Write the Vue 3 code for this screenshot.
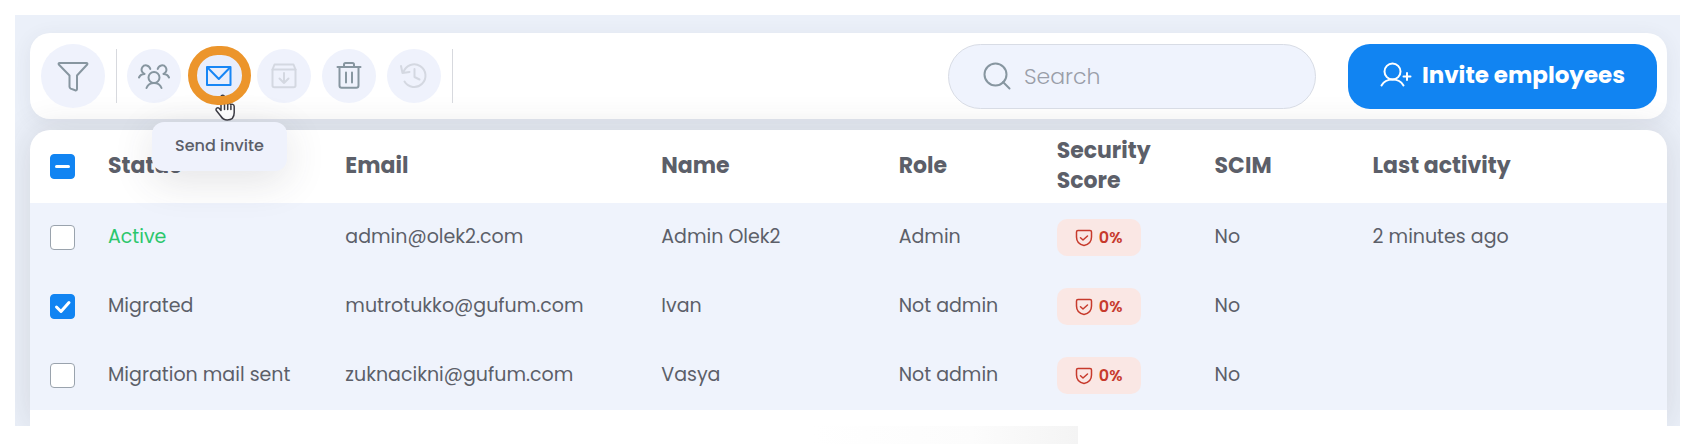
<template>
  <div class="page">
    <main class="panel">
      <div class="toolbar">
        <button class="icon-btn icon-btn-large" type="button" aria-label="Filter">
          <svg width="32" height="32" viewBox="0 0 32 32">
            <path d="M2.500 3h27c.8 0 1.200.9.700 1.500L20 15.500V29c0 1.200-.9 1.700-1.800 1.300l-4.500-1.700c-.8-.4-1.200-1-1.200-1.800V15.500L1.800 4.500C1.300 3.900 1.700 3 2.500 3z" />
          </svg>
        </button>
        <span class="divider"></span>
        <div class="actions">
          <div
            v-for="action in actions"
            :key="action.name"
            class="action"
            :class="{ 'action-current': action.name === hovered }"
          >
            <button
              class="icon-btn"
              :class="{ 'icon-btn-active': action.name === hovered }"
              type="button"
              :disabled="action.disabled"
              :aria-label="action.label"
            >
              <svg width="32" height="32" viewBox="0 0 32 32">
                <path v-for="d in action.paths" :key="d" :d="d" />
              </svg>
            </button>
            <template v-if="action.name === hovered">
              <svg class="cursor" width="21" height="27" viewBox="0 0 21 27">
                <path d="M6 16.500V3.200c0-2.500 3.400-2.500 3.400 0v7c.3-1.900 3-1.700 3.200.2.500-1.500 3-1.200 3.200.6.600-1.200 3.400-1 3.400 1.500v6c0 4.500-2.500 7.500-7 7.500-3.500 0-5-1.500-6.500-4L1.300 16.500c-1-2 1.300-3.700 2.800-2.200z" />
                <path d="M9.500 10.500v5M12.700 11v4.500M15.900 12v3.500" />
              </svg>
              <span class="ring"></span>
              <span class="tooltip" role="tooltip">{{ action.label }}</span>
            </template>
          </div>
        </div>
        <span class="divider"></span>

        <label class="search">
          <svg width="28" height="28" viewBox="0 0 28 28">
            <circle cx="12.500" cy="12.500" r="11" />
            <path d="M20 20l6.500 6.500" />
          </svg>
          <input v-model="query" type="text" placeholder="Search" aria-label="Search" />
        </label>
        <button class="invite" type="button">
          <svg width="32" height="26" viewBox="0 0 32 26">
            <circle cx="12.500" cy="9.500" r="8" />
            <path d="M1.500 23.500c2-3.600 5.600-6 11-6s9 2.400 11 6M27 11v7M23.500 14.500h7" />
          </svg>
          Invite employees
        </button>
      </div>

      <div class="table-card">
        <table>
          <thead>
            <tr>
              <th class="col-check">
                <span class="check">
                  <input type="checkbox" class="partial" aria-label="Select all" />
                  <svg width="25" height="25" viewBox="0 0 25 25"><path d="M6.500 12.500h12" /></svg>
                </span>
              </th>
              <th
                v-for="col in columns"
                :key="col.key"
                :class="`col-${col.key}`"
              >
                {{ col.title }}
              </th>
            </tr>
          </thead>
          <tbody>
            <tr v-for="row in rows" :key="row.email">
              <td class="col-check">
                <span class="check">
                  <input v-model="row.selected" type="checkbox" :aria-label="`Select ${row.name}`" />
                  <svg v-if="row.selected" width="25" height="25" viewBox="0 0 25 25">
                    <path d="M6.500 13l4.500 4.500 8-9" />
                  </svg>
                </span>
              </td>
              <td :class="{ 'status-active': row.status === 'Active' }">{{ row.status }}</td>
              <td>{{ row.email }}</td>
              <td>{{ row.name }}</td>
              <td>{{ row.role }}</td>
              <td class="cell-score">
                <span class="score">
                  <svg width="18" height="18" viewBox="0 0 18 18">
                    <path d="M3 1.500h12c.9 0 1.500.6 1.500 1.500v5c0 4-2.500 7.500-7.500 8.500C4 15.500 1.500 12 1.500 8V3c0-.9.6-1.500 1.500-1.500z" />
                    <path d="M5.500 8.700l2.500 2.300 4.500-4" />
                  </svg>
                  {{ row.score }}%
                </span>
              </td>
              <td>{{ row.scim ? 'Yes' : 'No' }}</td>
              <td>{{ row.activity }}</td>
            </tr>
          </tbody>
        </table>
      </div>
    </main>
  </div>
</template>

<script setup>
import { ref } from 'vue'

const query = ref('')
const hovered = ref('mail')

const actions = [
  {
    name: 'group',
    label: 'Change group',
    paths: [
      'M10.500 17.500a5.500 5.500 0 1 0 11 0a5.500 5.500 0 1 0-11 0z',
      'M8.500 28c1.200-3.200 4-5 7.500-5s6.300 1.800 7.500 5',
      'M1 17.500c1-2.300 2.800-3.600 5.500-3.600M6.500 13.900c-3-1.300-3.600-4.400-2.200-6.600 2-3 7-2.600 8 1.700',
      'M31 17.500c-1-2.300-2.800-3.600-5.500-3.600M25.500 13.900c3-1.300 3.600-4.400 2.200-6.600-2-3-7-2.600-8 1.700'
    ]
  },
  {
    name: 'mail',
    label: 'Send invite',
    paths: ['M4 7h23.500v18H4z', 'M4.500 7.500l11.300 11.500L27 7.500']
  },
  {
    name: 'archive',
    label: 'Archive',
    disabled: true,
    paths: [
      'M4.500 9.500h23v16c0 1-.8 1.800-1.800 1.800H6.300c-1 0-1.800-.8-1.800-1.800z',
      'M4.500 9.500l2-5h19l2 5',
      'M16 13v10M11.500 18.500l4.500 4.500 4.500-4.500'
    ]
  },
  {
    name: 'delete',
    label: 'Delete',
    paths: [
      'M4.500 7h23M11 7V4.500c0-.9.600-1.500 1.500-1.500h7c.9 0 1.500.6 1.500 1.500V7',
      'M6.500 7v18.500c0 1.300.9 2.300 2.200 2.300h14.600c1.300 0 2.200-1 2.200-2.300V7',
      'M13 12.500v10M19 12.500v10'
    ]
  },
  {
    name: 'restore',
    label: 'Restore',
    disabled: true,
    paths: [
      'M5.500 12a11.300 11.300 0 1 1 1 9.500',
      'M3 6l1.500 7 7-1',
      'M16.500 9v8l5 2.500'
    ]
  }
]

const columns = [
  { key: 'status', title: 'Status' },
  { key: 'email', title: 'Email' },
  { key: 'name', title: 'Name' },
  { key: 'role', title: 'Role' },
  { key: 'score', title: 'Security Score' },
  { key: 'scim', title: 'SCIM' },
  { key: 'activity', title: 'Last activity' }
]

const rows = ref([
  { selected: false, status: 'Active', email: 'admin@olek2.com', name: 'Admin Olek2', role: 'Admin', score: 0, scim: false, activity: '2 minutes ago' },
  { selected: true, status: 'Migrated', email: 'mutrotukko@gufum.com', name: 'Ivan', role: 'Not admin', score: 0, scim: false, activity: '' },
  { selected: false, status: 'Migration mail sent', email: 'zuknacikni@gufum.com', name: 'Vasya', role: 'Not admin', score: 0, scim: false, activity: '' }
])
</script>

<style>
body {
  margin: 0;
  background-color: #fff;
}
</style>

<style scoped>
.page {
  padding: 15px 10px 18px 15px;
  background: linear-gradient(to right, #fff, #fcfcfc 60%, #f4f4f4) 57% 100% / 266px 18px no-repeat #fff;
  font-family: Poppins, Inter, "Open Sans", sans-serif;
  color: #5c5f69;
}

.page *,
.page *::after {
  box-sizing: border-box;
}

.panel {
  padding: 18px 13px 0 15px;
  background-color: #ebf0f9;
  overflow: hidden;
}

.toolbar {
  display: flex;
  align-items: center;
  height: 86px;
  padding: 0 10px 0 11px;
  margin-bottom: 11px;
  border-radius: 20px;
  background-color: #fff;
  box-shadow: 0 4px 20px rgba(70, 60, 80, 0.08);
}

svg {
  flex-shrink: 0;
  fill: none;
  stroke: currentColor;
  stroke-width: 2;
  stroke-linecap: round;
  stroke-linejoin: round;
}

button {
  border: 0;
  padding: 0;
  font-family: inherit;
  cursor: pointer;
}

.icon-btn {
  display: flex;
  align-items: center;
  justify-content: center;
  width: 54px;
  height: 54px;
  border-radius: 50%;
  background-color: #eff2fc;
  color: #8796a0;
}

.icon-btn:disabled {
  color: #d4d8e1;
}

.icon-btn-active {
  background-color: #e9eefb;
  color: #1786f5;
}

.icon-btn-large {
  width: 64px;
  height: 64px;
}

.divider {
  width: 1px;
  height: 54px;
  margin: 0 10px 0 11px;
  background-color: #d7d9de;
}

.actions {
  display: flex;
  gap: 11px;
}

.action-current {
  position: relative;
  z-index: 2;
}

.ring {
  position: absolute;
  top: -3px;
  left: -4px;
  width: 63px;
  height: 59px;
  border: 9px solid #ec952b;
  border-radius: 30px;
}

.cursor {
  position: absolute;
  top: 45px;
  left: 23px;
  stroke: #3c3c44;
  stroke-width: 1.5;
}

.cursor path:first-child {
  fill: #fff;
}

.tooltip {
  position: absolute;
  top: 73px;
  left: -40px;
  padding: 11px 23px 13px;
  border-radius: 12px;
  background-color: #eff2fc;
  box-shadow: 0 10px 40px rgba(60, 60, 70, 0.14);
  font-size: 16px;
  font-weight: 500;
  line-height: 25px;
  white-space: nowrap;
}

.search {
  display: flex;
  align-items: center;
  gap: 13px;
  width: 368px;
  height: 65px;
  margin-left: auto;
  padding: 0 34px;
  border: 1px solid #d8dce5;
  border-radius: 33px;
  background-color: #eff3fd;
  color: #8796a0;
}

.search input {
  flex: 1;
  min-width: 0;
  padding: 0;
  border: 0;
  outline: 0;
  background: none;
  font-family: inherit;
  font-size: 22px;
  font-weight: 300;
  color: #5c5f69;
}

.search input::placeholder {
  color: #9a9ea9;
  opacity: 1;
}

.invite {
  display: flex;
  align-items: center;
  justify-content: center;
  gap: 10px;
  width: 309px;
  height: 65px;
  padding-bottom: 2px;
  margin-left: 32px;
  border-radius: 22px;
  background-color: #1184f2;
  color: #fff;
  font-size: 23px;
  font-weight: 700;
}

.table-card {
  padding-bottom: 16px;
  border-radius: 20px 20px 0 0;
  background-color: #fff;
  box-shadow: 0 0 36px rgba(60, 60, 60, 0.14);
}

table {
  width: 100%;
  table-layout: fixed;
  border-collapse: collapse;
}

th,
td {
  padding: 0 0 2px;
  text-align: left;
  vertical-align: middle;
}

th {
  height: 73px;
  padding-right: 40px;
  font-size: 22px;
  font-weight: 700;
  line-height: 30px;
}

td {
  height: 69px;
  font-size: 19px;
  line-height: 28px;
  white-space: nowrap;
}

tbody tr {
  background-color: #eff3fc;
}

.col-check {
  width: 78px;
  padding: 0 0 0 20px;
}

.cell-score {
  padding: 0;
}

.col-status,
.col-name {
  width: 14.5%;
}

.col-email {
  width: 19.3%;
}

.col-role,
.col-score,
.col-scim {
  width: 9.65%;
}

.col-role,
.col-scim {
  padding-right: 0;
}

.status-active {
  color: #2bc76c;
}

.check {
  display: grid;
  width: 25px;
  height: 25px;
}

.check input,
.check svg {
  grid-area: 1 / 1;
}

.check input {
  appearance: none;
  width: 25px;
  height: 25px;
  margin: 0;
  border: 1px solid #9aa3ad;
  border-radius: 4px;
  background-color: #fff;
}

.check input:checked,
.check .partial {
  border-color: #1184f2;
  background-color: #1184f2;
}

.check svg {
  color: #fff;
  stroke-width: 3;
  pointer-events: none;
}

.score {
  display: inline-flex;
  align-items: center;
  justify-content: center;
  gap: 6px;
  width: 84px;
  height: 37px;
  border-radius: 10px;
  background-color: #fae7e4;
  color: #c73a2c;
  font-size: 16px;
  font-weight: 600;
  vertical-align: middle;
}

.score svg {
  stroke-width: 1.5;
}
</style>
